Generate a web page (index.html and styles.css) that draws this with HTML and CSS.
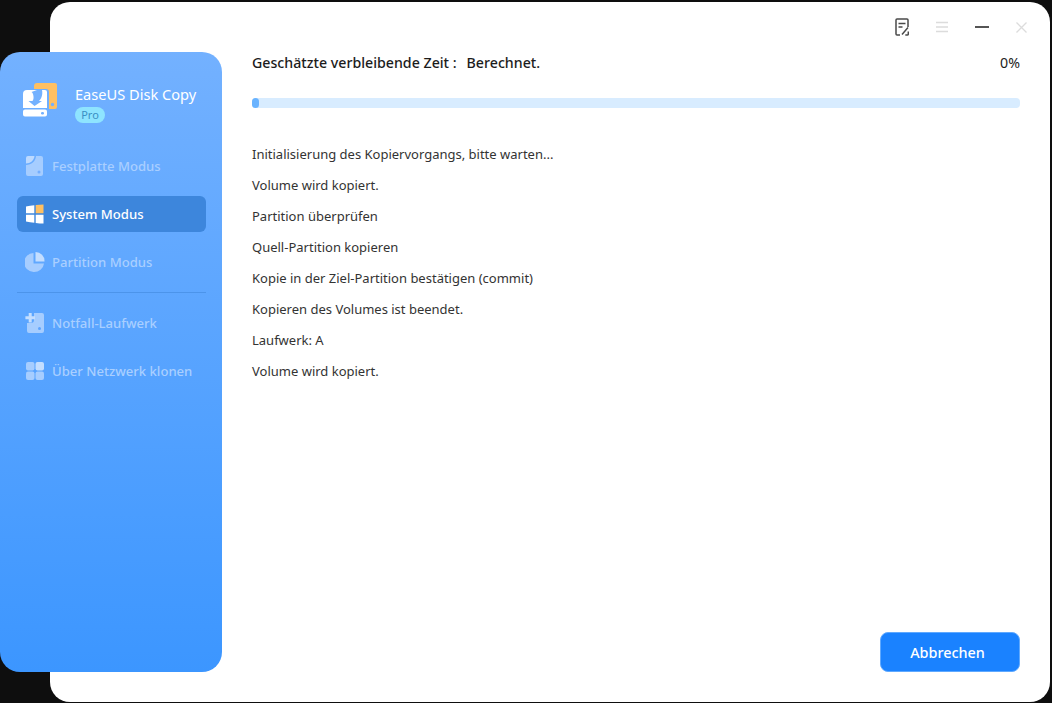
FILE: index.html
```html
<!DOCTYPE html>
<html lang="de">
<head>
<meta charset="utf-8">
<title>EaseUS Disk Copy</title>
<link rel="stylesheet" href="styles.css">
</head>
<body>
<div class="desktop">
  <aside class="sidebar">
    <div class="brand">
      <svg class="logo" width="36" height="36" viewBox="0 0 36 36">
        <path d="M11 3a3 3 0 0 1 3-3h18a2 2 0 0 1 2 2v22a2 2 0 0 1-2 2h-6V9a3 3 0 0 0-3-3H11z" fill="#ffc062"/>
        <circle cx="29.500" cy="21.500" r="1.700" fill="#73b1ff"/>
        <path d="M0 11a4 4 0 0 1 4-4h18a2 2 0 0 1 2 2v16H0z" fill="#fff"/>
        <path d="M14 7h5c1 4-.5 9-3 11h3l-7.500 5-6-5h4c2-2 1-8-1-9z" fill="#73b1ff"/>
        <path d="M2 26.500h20a2 2 0 0 1 2 2v3a2 2 0 0 1-2 2H2a2 2 0 0 1-2-2v-3a2 2 0 0 1 2-2z" fill="#fff"/>
        <rect x="18" y="29" width="3" height="2.500" rx="1.200" fill="#73b1ff"/>
      </svg>
      <div class="brand-text">
        <div class="brand-name">EaseUS Disk Copy</div>
        <span class="badge">Pro</span>
      </div>
    </div>
    <nav class="nav">
      <a class="nav-item">
        <svg class="nav-icon" width="20" height="20" viewBox="0 0 20 20"><path d="M11 0h5a2 2 0 0 1 2 2v16a2 2 0 0 1-2 2H3a2 2 0 0 1-2-2V9c5.500 0 9.500-3.500 10-9z" fill="#a6cdff"/><path d="M3 0h6.500C9 4.500 5.500 7.500 1 7.500V2a2 2 0 0 1 2-2z" fill="#bcd9ff"/><circle cx="14" cy="16" r="1.500" fill="#73aeff"/></svg>
        <span>Festplatte Modus</span>
      </a>
      <a class="nav-item active">
        <svg class="nav-icon" width="20" height="20" viewBox="0 0 20 20"><path d="M1 2.500Q5 1.500 9.300 1.200V9.300H1z" fill="#fff"/><path d="M10.700 1Q15 .5 18.500 .5V9.300h-7.800z" fill="#ffc062"/><path d="M1 10.700H9.300V18.800Q5 18.500 1 17.500z" fill="#fff"/><path d="M10.700 10.700H18.500V19.500Q15 19.500 10.700 19z" fill="#fff"/></svg>
        <span>System Modus</span>
      </a>
      <a class="nav-item">
        <svg class="nav-icon" width="20" height="20" viewBox="0 0 20 20"><path d="M8.500 1v10.500H19A10 9.500 0 1 1 8.500 1z" fill="#a6cdff"/><path d="M10.500 0a9 9 0 0 1 9 9.500h-9z" fill="#c4deff"/></svg>
        <span>Partition Modus</span>
      </a>
      <hr class="divider">
      <a class="nav-item">
        <svg class="nav-icon" width="20" height="20" viewBox="0 0 20 20"><path d="M9 0h8a2 2 0 0 1 2 2v16a2 2 0 0 1-2 2H4a2 2 0 0 1-2-2v-8h4a3 3 0 0 0 3-3z" fill="#a6cdff"/><path d="M3.700 0h3v3.300H10v2.900H6.700v3.300h-3V6.200H.4V3.300h3.300z" fill="#c4deff"/><circle cx="14.500" cy="15.500" r="1.500" fill="#5ca3ff"/></svg>
        <span>Notfall-Laufwerk</span>
      </a>
      <a class="nav-item">
        <svg class="nav-icon" width="20" height="20" viewBox="0 0 20 20"><rect x="1" y="1" width="8.500" height="8.500" rx="2" fill="#a6cdff"/><rect x="10.500" y="1" width="8.500" height="8.500" rx="2" fill="#c4deff"/><rect x="1" y="10.500" width="8.500" height="8.500" rx="2" fill="#a6cdff"/><rect x="10.500" y="10.500" width="8.500" height="8.500" rx="2" fill="#a6cdff"/></svg>
        <span>Über Netzwerk klonen</span>
      </a>
    </nav>
  </aside>
  <main class="window">
    <header class="titlebar">
      <svg class="tb-icon" width="14" height="18" viewBox="0 0 14 18" fill="none" stroke="#4a4a4a" stroke-width="1.500"><path d="M5 17H2a1 1 0 0 1-1-1V2a1 1 0 0 1 1-1h10a1 1 0 0 1 1 1v7"/><path d="M3.500 5.500h7M3.500 9h4"/><path d="M7 16.500 13 9.500M13.300 13.500V16a1 1 0 0 1-1 1h-2"/></svg>
      <svg class="tb-icon" width="12" height="12" viewBox="0 0 12 12" stroke="#dcdcdc" stroke-width="1.500"><path d="M0 1.500h12M0 6h12M0 10.500h12"/></svg>
      <svg class="tb-icon" width="14" height="2" viewBox="0 0 14 2" stroke="#555" stroke-width="2"><path d="M0 1h14"/></svg>
      <svg class="tb-icon" width="11" height="11" viewBox="0 0 11 11" stroke="#dcdcdc" stroke-width="1.300"><path d="M.5.5l10 10M10.500.5l-10 10"/></svg>
    </header>
    <section class="content">
      <div class="status">
        <div class="status-left"><span>Geschätzte verbleibende Zeit :</span><span>Berechnet.</span></div>
        <span class="percent">0%</span>
      </div>
      <div class="progress"><div class="progress-fill"></div></div>
      <ul class="log">
        <li>Initialisierung des Kopiervorgangs, bitte warten...</li>
        <li>Volume wird kopiert.</li>
        <li>Partition überprüfen</li>
        <li>Quell-Partition kopieren</li>
        <li>Kopie in der Ziel-Partition bestätigen (commit)</li>
        <li>Kopieren des Volumes ist beendet.</li>
        <li>Laufwerk: A</li>
        <li>Volume wird kopiert.</li>
      </ul>
      <div class="actions"><button class="cancel" type="button">Abbrechen</button></div>
    </section>
  </main>
</div>
</body>
</html>
```
FILE: styles.css
```css
* { box-sizing: border-box; }
html, body { margin: 0; height: 100%; overflow: hidden; background: #0e0e0e; }
body { font-family: "Noto Sans", "Open Sans", sans-serif; }
.desktop { position: relative; width: 1052px; height: 703px; padding: 2px 2px 1px 50px; }
.window { height: 700px; background: #fff; border-radius: 20px; display: flex; flex-direction: column; }
.sidebar {
  position: absolute; left: 0; top: 52px; width: 222px; height: 620px;
  border-radius: 20px; padding: 28px 16px 0 17px;
  background: linear-gradient(180deg, #73b1ff 0%, #3c96ff 100%);
}
.brand { display: flex; gap: 17px; padding-left: 6px; height: 68px; }
.logo { flex: none; margin-top: 3px; margin-right: -1px; }
.brand-text { padding-top: 4px; }
.brand-name { font-size: 14.6px; line-height: 20px; color: #fff; }
.badge {
  display: block; width: 30px; height: 16px; margin-top: 3px; border-radius: 8px;
  background: #8ee4ff; color: #3a8fc4; font-size: 11px; line-height: 16px; text-align: center;
}
.nav { display: flex; flex-direction: column; gap: 12px; }
.nav-item {
  display: flex; align-items: center; gap: 7px; height: 36px; padding-left: 8px;
  border-radius: 6px; color: #a9cfff; font-size: 13.1px; font-weight: 500;
}
.nav-icon { flex: none; }
.nav-item.active { background: #3d86dc; color: #fff; }
.divider { width: 100%; margin: 0; height: 1px; border: 0; background: #4c94ea; }
.titlebar { display: flex; align-items: center; justify-content: flex-end; height: 50px; padding-right: 23px; }
.titlebar .tb-icon { flex: none; margin-left: 27px; }
.content { flex: 1; display: flex; flex-direction: column; padding-left: 202px; padding-right: 30px; }
.status { display: flex; justify-content: space-between; color: #1c1c1c; font-size: 14.2px; line-height: 20px; font-weight: 500; margin-top: 1px; }
.status-left { display: flex; gap: 10px; }
.percent { font-weight: 400; }
.progress { height: 10px; margin-top: 25px; border-radius: 4px; background: #d8ecff; }
.progress-fill { width: 7px; height: 10px; border-radius: 5px; background: #69b3ff; }
.log { list-style: none; margin: 36px 0 0; padding: 0; display: flex; flex-direction: column; gap: 11px; color: #333; font-size: 13px; line-height: 20px; }
.actions { margin-top: auto; display: flex; justify-content: flex-end; padding-bottom: 30px; }
.cancel {
  width: 140px; height: 40px; padding: 0 5px 0 0; border: 1px solid #5fa9ff; border-radius: 8px; background: #1a82ff; color: #fff;
  font: 500 14.4px "Noto Sans", "Open Sans", sans-serif;
}
```
